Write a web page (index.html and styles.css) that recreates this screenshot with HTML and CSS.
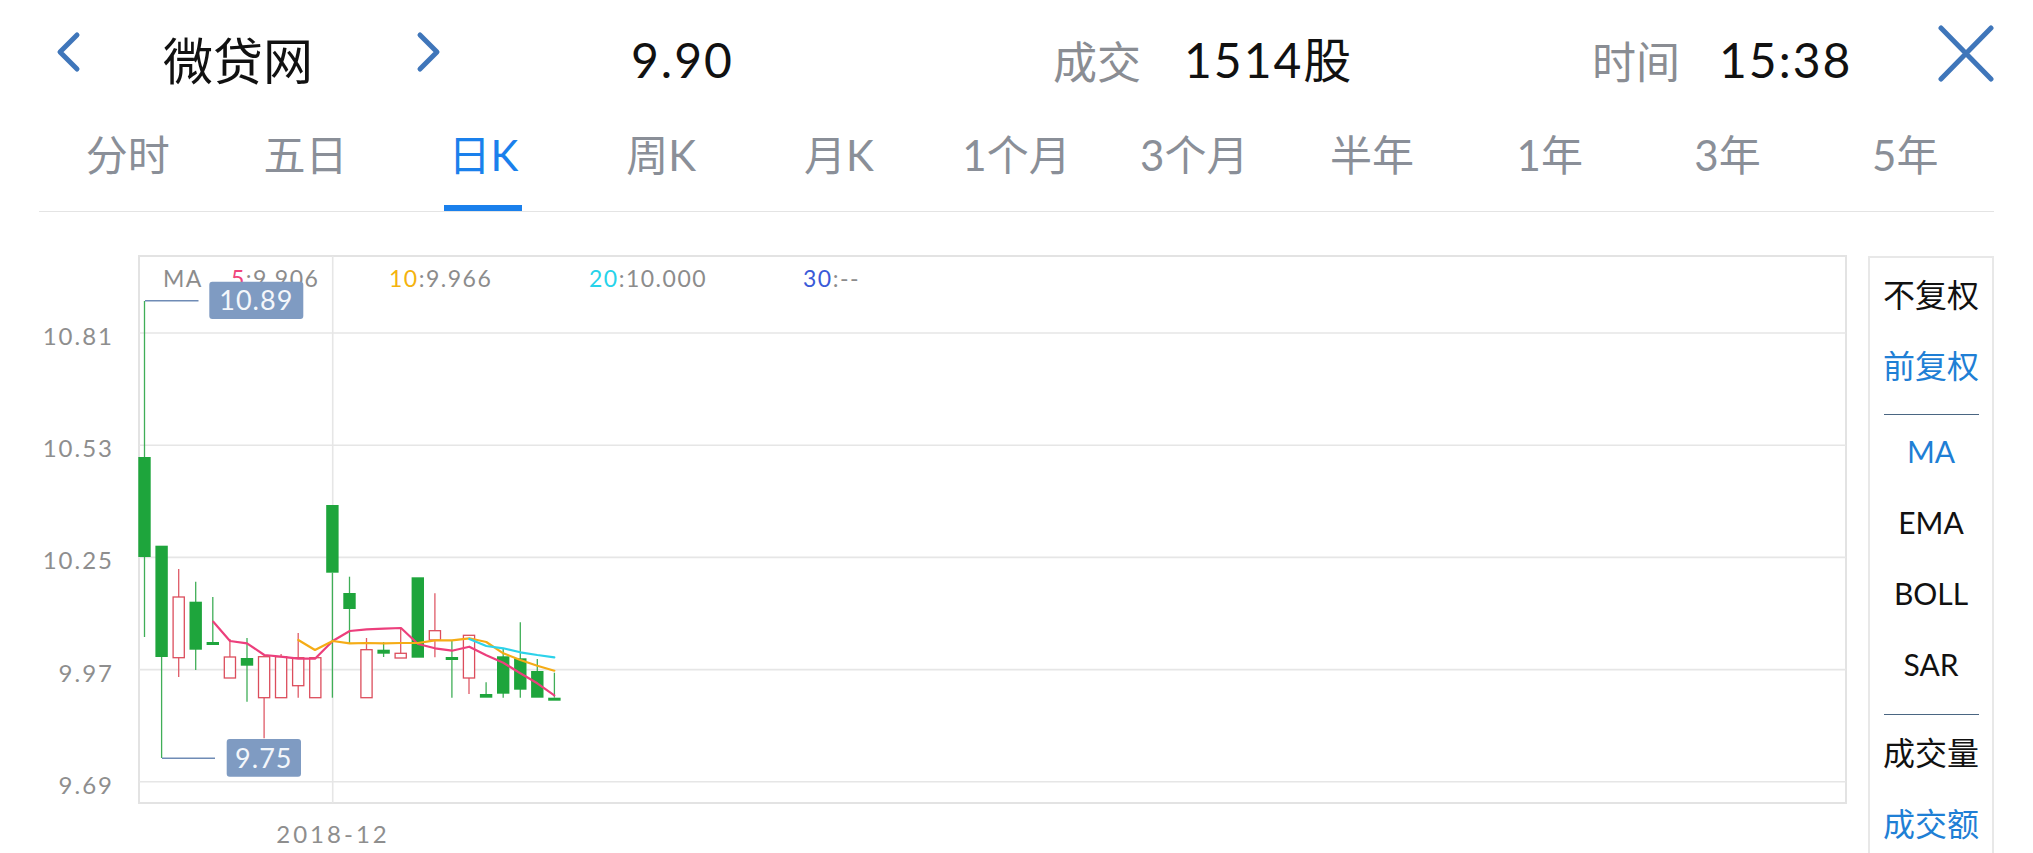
FILE: index.html
```html
<!DOCTYPE html>
<html lang="zh-CN">
<head>
<meta charset="utf-8">
<title>微贷网 日K</title>
<link rel="stylesheet" href="styles.css">
</head>
<body>
<div class="app">
  <header class="topbar">
    <button class="nav nav-prev" aria-label="上一只">
      <svg width="26" height="42" viewBox="0 0 26 42"><path d="M22 4 L5 21 L22 38" /></svg>
    </button>
    <div class="stock-name">微贷网</div>
    <button class="nav nav-next" aria-label="下一只">
      <svg width="26" height="42" viewBox="0 0 26 42"><path d="M4 4 L21 21 L4 38" /></svg>
    </button>
    <div class="price">9.90</div>
    <div class="stat stat-deal"><span class="stat-label">成交</span><span class="stat-value">1514股</span></div>
    <div class="stat stat-time"><span class="stat-label">时间</span><span class="stat-value">15:38</span></div>
    <button class="close" aria-label="关闭">
      <svg width="58" height="57" viewBox="0 0 58 57"><path d="M4 3 L54 54 M54 3 L4 54" /></svg>
    </button>
  </header>

  <nav class="tabs">
    <div class="tab"><span class="tab-label">分时</span><span class="tab-bar"></span></div>
    <div class="tab"><span class="tab-label">五日</span><span class="tab-bar"></span></div>
    <div class="tab active"><span class="tab-label">日K</span><span class="tab-bar"></span></div>
    <div class="tab"><span class="tab-label">周K</span><span class="tab-bar"></span></div>
    <div class="tab"><span class="tab-label">月K</span><span class="tab-bar"></span></div>
    <div class="tab"><span class="tab-label">1个月</span><span class="tab-bar"></span></div>
    <div class="tab"><span class="tab-label">3个月</span><span class="tab-bar"></span></div>
    <div class="tab"><span class="tab-label">半年</span><span class="tab-bar"></span></div>
    <div class="tab"><span class="tab-label">1年</span><span class="tab-bar"></span></div>
    <div class="tab"><span class="tab-label">3年</span><span class="tab-bar"></span></div>
    <div class="tab"><span class="tab-label">5年</span><span class="tab-bar"></span></div>
  </nav>

  <section class="main">
    <div class="chart">
      <svg class="kline" width="1847" height="598" viewBox="0 255 1847 598">
        <!-- frame & grid -->
        <rect class="frame" x="139" y="256" width="1707" height="547" />
        <g class="grid">
          <line x1="139" y1="333" x2="1846" y2="333" />
          <line x1="139" y1="445.2" x2="1846" y2="445.2" />
          <line x1="139" y1="557.4" x2="1846" y2="557.4" />
          <line x1="139" y1="669.6" x2="1846" y2="669.6" />
          <line x1="139" y1="781.8" x2="1846" y2="781.8" />
          <line x1="332.7" y1="256" x2="332.7" y2="803" />
        </g>
        <g class="y-labels">
          <text x="114" y="345">10.81</text>
          <text x="114" y="457">10.53</text>
          <text x="114" y="569">10.25</text>
          <text x="114" y="682">9.97</text>
          <text x="114" y="794">9.69</text>
        </g>
        <text class="x-label" x="333" y="843">2018-12</text>

        <!-- wicks -->
        <g class="wick-down">
          <line x1="144.5" y1="301" x2="144.5" y2="637" />
          <line x1="161.6" y1="657" x2="161.6" y2="758" />
          <line x1="195.7" y1="581.7" x2="195.7" y2="670" />
          <line x1="212.8" y1="597" x2="212.8" y2="645" />
          <line x1="247.0" y1="638" x2="247.0" y2="701.7" />
          <line x1="332.4" y1="572.7" x2="332.4" y2="697.7" />
          <line x1="349.5" y1="576.7" x2="349.5" y2="643" />
          <line x1="383.6" y1="642" x2="383.6" y2="657" />
          <line x1="451.9" y1="640" x2="451.9" y2="697.7" />
          <line x1="486.1" y1="682.3" x2="486.1" y2="694" />
          <line x1="503.2" y1="648.3" x2="503.2" y2="697.7" />
          <line x1="520.3" y1="622.3" x2="520.3" y2="697.7" />
          <line x1="537.3" y1="659" x2="537.3" y2="671" />
          <line x1="554.4" y1="672.7" x2="554.4" y2="697.7" />
        </g>
        <g class="wick-up">
          <line x1="178.7" y1="569" x2="178.7" y2="677" />
          <line x1="229.9" y1="639" x2="229.9" y2="657" />
          <line x1="264.1" y1="697.7" x2="264.1" y2="738.3" />
          <line x1="281.1" y1="654" x2="281.1" y2="657" />
          <line x1="298.2" y1="633" x2="298.2" y2="697.7" />
          <line x1="366.5" y1="638" x2="366.5" y2="650" />
          <line x1="400.7" y1="628" x2="400.7" y2="653" />
          <line x1="434.9" y1="593.3" x2="434.9" y2="657.3" />
          <line x1="469.0" y1="678" x2="469.0" y2="694" />
        </g>

        <!-- bodies -->
        <g class="body-down">
          <rect x="138.3" y="457" width="12.4" height="100" />
          <rect x="155.4" y="545.7" width="12.4" height="111.3" />
          <rect x="189.5" y="601.7" width="12.4" height="48" />
          <rect x="206.6" y="642" width="12.4" height="3" />
          <rect x="240.8" y="658" width="12.4" height="7.7" />
          <rect x="326.2" y="505" width="12.4" height="67.7" />
          <rect x="343.3" y="593" width="12.4" height="16" />
          <rect x="377.4" y="649.7" width="12.4" height="4" />
          <rect x="411.6" y="577.3" width="12.4" height="80.4" />
          <rect x="445.7" y="657" width="12.4" height="3" />
          <rect x="479.9" y="694" width="12.4" height="3.7" />
          <rect x="497.0" y="656.3" width="12.4" height="37.4" />
          <rect x="514.1" y="658.3" width="12.4" height="31.4" />
          <rect x="531.1" y="671" width="12.4" height="26.7" />
          <rect x="548.2" y="697.7" width="12.4" height="3" />
        </g>
        <g class="body-up">
          <rect x="173.1" y="597" width="11.2" height="60.7" />
          <rect x="224.3" y="657" width="11.2" height="21" />
          <rect x="258.5" y="656.7" width="11.2" height="41" />
          <rect x="275.5" y="656.7" width="11.2" height="41" />
          <rect x="292.6" y="657.7" width="11.2" height="28" />
          <rect x="309.7" y="657.7" width="11.2" height="40" />
          <rect x="360.9" y="649.7" width="11.2" height="48" />
          <rect x="395.1" y="653.3" width="11.2" height="4.7" />
          <rect x="429.3" y="630.7" width="11.2" height="9.3" />
          <rect x="463.4" y="635.3" width="11.2" height="42.7" />
        </g>

        <!-- moving averages -->
        <polyline class="ma ma5-line" points="213.3,621.7 230,641 247,643.3 264.3,655 280.7,656.7 298.3,658.7 315,658.7 332.7,641 349.7,631 366.7,629.3 384,628.7 401,628 418,644 435,648.3 452,650.7 469.3,646.7 486.3,655.3 503.3,662.7 520.3,673.3 537.3,683.3 554.3,695.3" />
        <polyline class="ma ma10-line" points="298.3,640 315,650 332.7,641 349.7,643.3 366.7,643 384,643.3 401,643 418,643 435,640.3 452,640.3 469.3,638.3 486.3,642 503.3,653.3 520.3,660 537.3,665.7 554.3,670.7" />
        <polyline class="ma ma20-line" points="469.3,639 486.3,646 503.3,648.3 520.3,652.3 537.3,655 554.3,657.3" />

        <!-- legend -->
        <g class="legend">
          <text x="163" y="287">MA</text>
          <text x="231" y="287"><tspan class="ma5">5</tspan>:9.906</text>
          <text x="389" y="287"><tspan class="ma10">10</tspan>:9.966</text>
          <text x="589" y="287"><tspan class="ma20">20</tspan>:10.000</text>
          <text x="803" y="287"><tspan class="ma30">30</tspan>:--</text>
        </g>

        <!-- high / low markers -->
        <g class="marker">
          <line x1="145" y1="300.7" x2="198.5" y2="300.7" />
          <rect x="209.3" y="281.7" width="94" height="37.3" rx="3" />
          <text x="256.3" y="310">10.89</text>
          <line x1="162" y1="758.3" x2="215" y2="758.3" />
          <rect x="226.7" y="739" width="74.3" height="37.7" rx="3" />
          <text x="263.8" y="768">9.75</text>
        </g>
      </svg>
    </div>

    <aside class="side">
      <div class="side-item">不复权</div>
      <div class="side-item on">前复权</div>
      <div class="side-sep"></div>
      <div class="side-item latin on">MA</div>
      <div class="side-item latin">EMA</div>
      <div class="side-item latin">BOLL</div>
      <div class="side-item latin">SAR</div>
      <div class="side-sep"></div>
      <div class="side-item">成交量</div>
      <div class="side-item on">成交额</div>
    </aside>
  </section>
</div>
</body>
</html>
```

FILE: styles.css
```css
html, body {
  margin: 0;
  padding: 0;
  background: #ffffff;
  overflow: hidden;
}

body {
  font-family: "Lato", "Noto Sans CJK SC", sans-serif;
  color: #111111;
}

.app {
  width: 2033px;
  height: 853px;
  overflow: hidden;
}

/* ---------- top bar ---------- */
.topbar {
  display: flex;
  align-items: center;
  height: 120px;
  padding-left: 55px;
  box-sizing: border-box;
}

.nav,
.close {
  border: 0;
  background: none;
  padding: 0;
  margin: 0 0 16px 0;
  display: flex;
  flex: none;
}

.nav svg path,
.close svg path {
  fill: none;
  stroke: #3f76ba;
  stroke-width: 5;
  stroke-linecap: round;
  stroke-linejoin: round;
}

.nav {
  width: 26px;
}

.stock-name {
  flex: none;
  margin-left: 82px;
  width: 253px;
  font-family: "Noto Sans CJK SC", sans-serif;
  font-size: 50px;
  line-height: 1;
  margin-bottom: 4px;
  color: #111;
}

.price {
  flex: none;
  margin-left: 189px;
  width: 422px;
  font-size: 48px;
  line-height: 1;
  letter-spacing: 2px;
  color: #111;
}

.stat {
  flex: none;
  display: flex;
  align-items: center;
}

.stat-deal {
  width: 539px;
  gap: 43px;
}

.stat-time {
  width: 345px;
  gap: 39px;
}

.stat-label {
  font-family: "Noto Sans CJK SC", sans-serif;
  font-size: 44px;
  line-height: 1;
  color: #8a8d93;
}

.stat-value {
  font-size: 48px;
  line-height: 1;
  letter-spacing: 2px;
  color: #111;
}

.close {
  width: 58px;
  margin-bottom: 14px;
}

/* ---------- period tabs ---------- */
.tabs {
  display: flex;
  margin: 0 39px;
  height: 92px;
  box-sizing: border-box;
  border-bottom: 1px solid #e4e4e4;
}

.tab {
  flex: 1;
  display: flex;
  flex-direction: column;
  align-items: center;
  justify-content: space-between;
}

.tab-label {
  margin-top: 10px;
  font-size: 42px;
  line-height: 50px;
  color: #8a8f98;
  white-space: nowrap;
}

.tab-bar {
  width: 78px;
  height: 6px;
  background: transparent;
}

.tab.active .tab-label {
  color: #1a80ec;
}

.tab.active .tab-bar {
  background: #1a80ec;
}

/* ---------- main chart area ---------- */
.main {
  display: flex;
  align-items: flex-start;
  margin-top: 43px;
  height: 598px;
  overflow: hidden;
}

.chart {
  flex: none;
  width: 1847px;
  height: 598px;
}

.kline {
  display: block;
}

.frame {
  fill: none;
  stroke: #e3e3e3;
  stroke-width: 2;
}

.grid line {
  stroke: #e6e6e6;
  stroke-width: 1.6;
}

.y-labels text {
  font-family: "Lato", sans-serif;
  font-size: 24px;
  letter-spacing: 2px;
  fill: #8e8e8e;
  text-anchor: end;
}

.x-label {
  font-family: "Lato", sans-serif;
  font-size: 24px;
  letter-spacing: 3px;
  fill: #8e8e8e;
  text-anchor: middle;
}

.wick-down line {
  stroke: #3fae57;
  stroke-width: 1.3;
}

.wick-up line {
  stroke: #df5a67;
  stroke-width: 1.3;
}

.body-down rect {
  fill: #1ea53c;
}

.body-up rect {
  fill: #ffffff;
  stroke: #dc4d5c;
  stroke-width: 1.3;
}

.ma {
  fill: none;
  stroke-width: 2.2;
  stroke-linejoin: round;
  stroke-linecap: round;
}

.ma5-line { stroke: #ec3f7c; }
.ma10-line { stroke: #f5ac16; }
.ma20-line { stroke: #2cd2ea; }

.legend text {
  font-family: "Lato", sans-serif;
  font-size: 23px;
  letter-spacing: 1.5px;
  fill: #8c8c8c;
}

.legend .ma5 { fill: #f0457c; }
.legend .ma10 { fill: #f4b30e; }
.legend .ma20 { fill: #27d3ea; }
.legend .ma30 { fill: #3a5ad8; }

.marker line {
  stroke: #6f8bb5;
  stroke-width: 1.6;
}

.marker rect {
  fill: #7f9bc2;
}

.marker text {
  font-family: "Lato", sans-serif;
  font-size: 27px;
  letter-spacing: 1px;
  fill: #f4f7fb;
  text-anchor: middle;
}

/* ---------- side panel ---------- */
.side {
  flex: none;
  width: 126px;
  height: 640px;
  margin-left: 21px;
  margin-top: 1px;
  box-sizing: border-box;
  border: 2px solid #e8e8e8;
  display: flex;
  flex-direction: column;
  align-items: stretch;
}

.side-item {
  height: 71px;
  line-height: 71px;
  text-align: center;
  font-family: "Noto Sans CJK SC", sans-serif;
  font-size: 32px;
  color: #111;
}

.side-item.latin {
  font-family: "Lato", sans-serif;
  font-size: 30px;
}

.side-item.on {
  color: #1f7fd5;
}

.side-sep {
  height: 1px;
  margin: 14px 13px 1px 14px;
  background: #4a6682;
}
```
